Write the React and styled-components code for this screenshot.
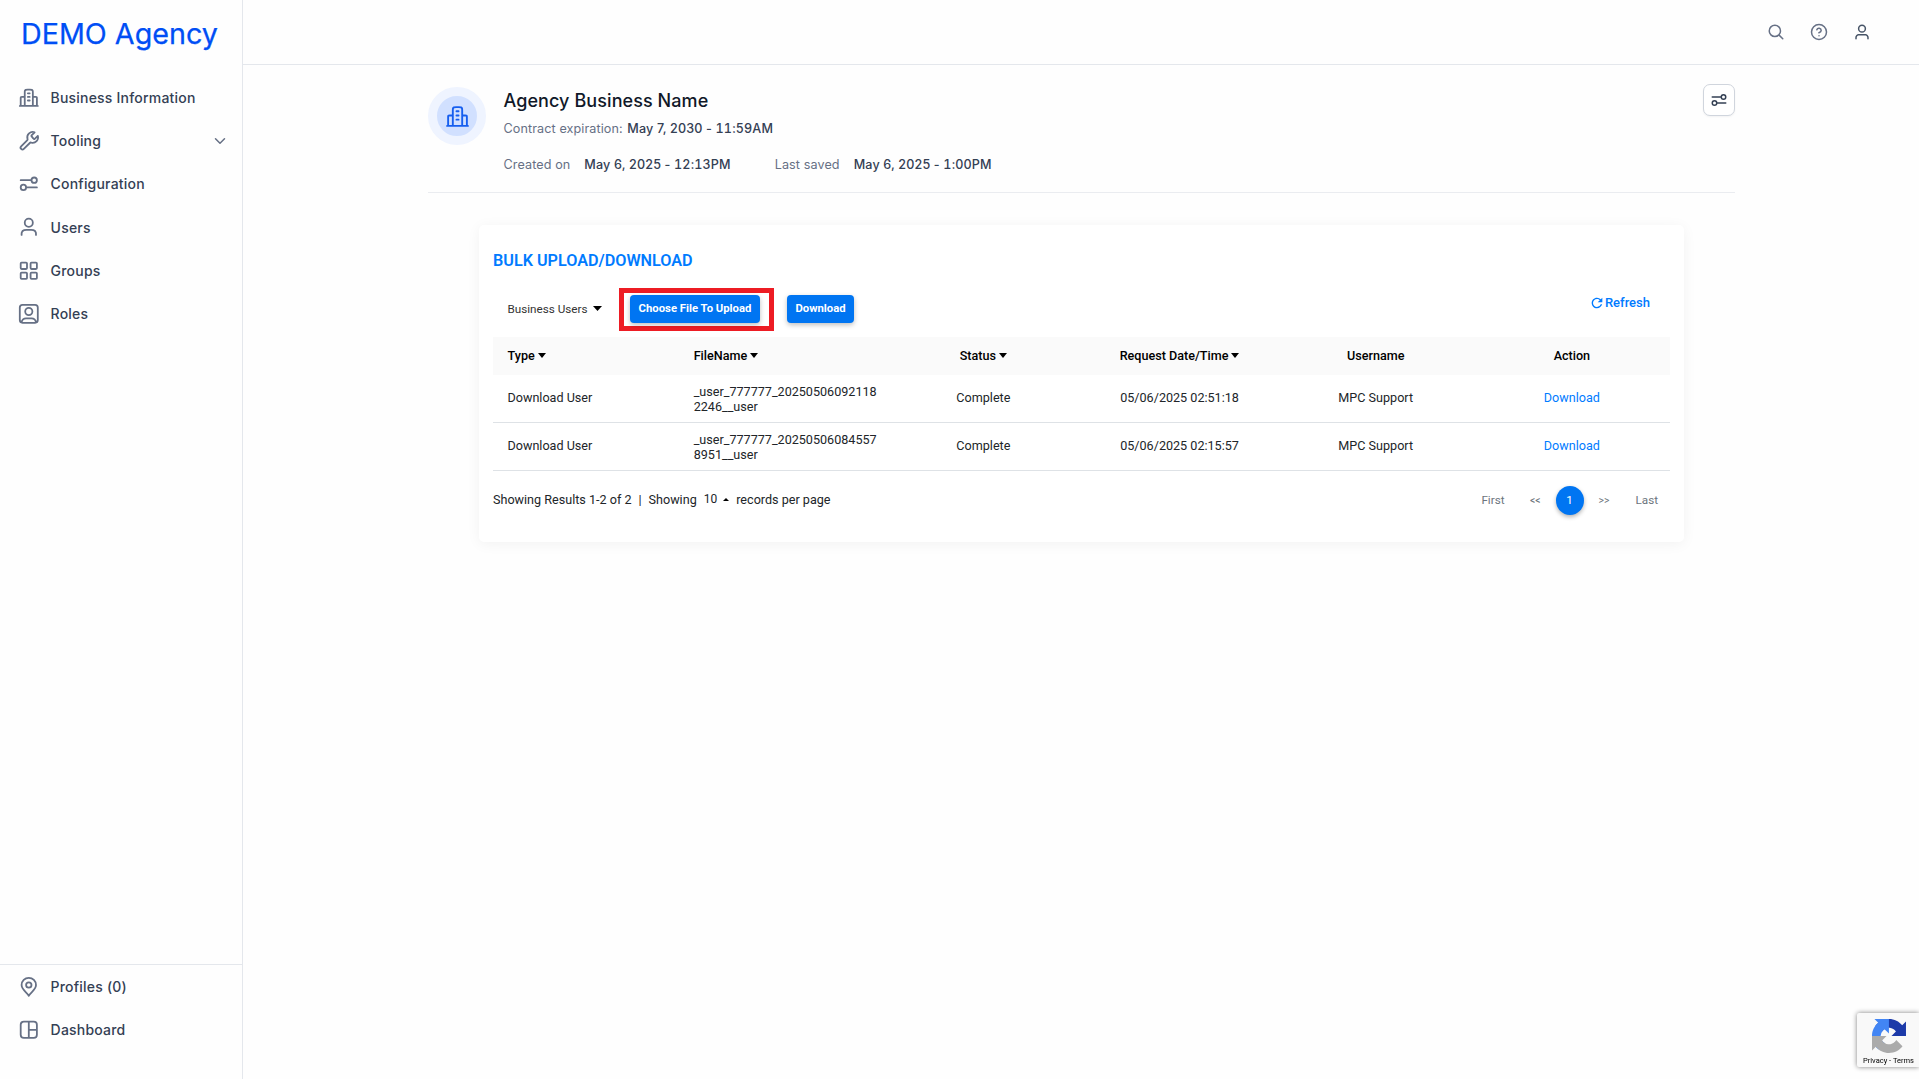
import React from "react";
import styled, { createGlobalStyle } from "styled-components";
import { MdRefresh } from "react-icons/md";

const GlobalStyle = createGlobalStyle`
  * {
    box-sizing: border-box;
  }
  body {
    margin: 0;
    background: #fefefe;
    font-family: "Inter", sans-serif;
    color: #344054;
    overflow: hidden;
  }
`;

const Page = styled.div`
  display: flex;
  height: 100vh;
  min-height: 1079px;
`;

const Sidebar = styled.aside`
  width: 243px;
  flex-shrink: 0;
  border-right: 1px solid #e4e7ec;
  display: flex;
  flex-direction: column;
  justify-content: space-between;
`;

const Logo = styled.div`
  padding: 16px 0 0 21px;
  height: 76px;
  font-size: 28.7px;
  line-height: 36px;
  color: #004ef5;
  -webkit-text-stroke: 0.25px #004ef5;
  white-space: nowrap;
`;

const Nav = styled.nav`
  display: flex;
  flex-direction: column;
`;

const NavItem = styled.a`
  display: flex;
  align-items: center;
  height: 43.2px;
  padding: 0 13px 0 18px;
  font-size: 14px;
  font-weight: 500;
  letter-spacing: 0.2px;
  color: #344054;
  span {
    flex: 1;
    margin-left: 11px;
  }
`;

const BottomNav = styled(Nav)`
  border-top: 1px solid #e4e7ec;
  height: 115px;
  gap: 1px;
  ${NavItem} {
    height: 42.6px;
  }
`;

const Icon = styled.svg`
  width: ${(props) => props.$size || 21.6}px;
  height: ${(props) => props.$size || 21.6}px;
  flex-shrink: 0;
  fill: none;
  stroke: ${(props) => props.$color || "#667085"};
  stroke-width: ${(props) => props.$stroke || 2};
  stroke-linecap: round;
  stroke-linejoin: round;
`;

const Main = styled.main`
  flex: 1;
  display: flex;
  flex-direction: column;
`;

const TopBar = styled.header`
  height: 65px;
  border-bottom: 1px solid #e4e7ec;
  display: flex;
  justify-content: flex-end;
  align-items: center;
  gap: 25px;
  padding-right: 48px;
`;

const Content = styled.section`
  width: 1307px;
  margin-left: 185px;
`;

const Profile = styled.div`
  display: flex;
  height: 128px;
  padding-top: 19px;
  border-bottom: 1px solid #eaecf0;
`;

const Avatar = styled.div`
  width: 58px;
  height: 58px;
  margin-top: 3px;
  border-radius: 50%;
  border: 9px solid #eff4ff;
  background: #d1e0ff;
  display: flex;
  align-items: center;
  justify-content: center;
`;

const Details = styled.div`
  flex: 1;
  margin-left: 17.5px;
  h1 {
    margin: 3px 0 0;
    font-size: 18px;
    line-height: 27px;
    font-weight: 500;
    letter-spacing: 0.08px;
    color: #101828;
  }
`;

const Meta = styled.div`
  display: flex;
  font-size: 12.6px;
  line-height: 18px;
  margin-top: ${(props) => props.$top}px;
  label {
    color: #667085;
    letter-spacing: 0.1px;
    margin-right: ${(props) => props.$gap}px;
  }
  span {
    font-weight: 500;
    letter-spacing: 0.15px;
    margin-right: 44px;
  }
  time {
    font-variant-numeric: tabular-nums;
  }
`;

const SettingsButton = styled.button`
  width: 32px;
  height: 32px;
  padding: 0;
  display: flex;
  align-items: center;
  justify-content: center;
  background: white;
  border: 1px solid #d0d5dd;
  border-radius: 7px;
  box-shadow: 0 1px 2px rgba(16, 24, 40, 0.05);
`;

const Card = styled.div`
  width: 1205px;
  height: 317px;
  margin: 32px auto 0;
  padding: 26px 14px 0;
  background: white;
  border-radius: 5px;
  box-shadow: 0 2px 14px rgba(0, 0, 0, 0.05);
  font-family: "Roboto", sans-serif;
  color: #212529;
  h2 {
    margin: 0;
    font-size: 16.2px;
    line-height: 20px;
    font-weight: 600;
    color: #007bff;
  }
`;

const Toolbar = styled.div`
  display: flex;
  align-items: center;
  height: 43px;
  margin: 17px 0 6px;
  padding: 0 20px 0 14.5px;
`;

const UserSelect = styled.div`
  display: flex;
  align-items: center;
  width: 111.5px;
  margin-bottom: 2px;
  font-size: 11.7px;
  color: #333;
  white-space: nowrap;
  svg {
    margin-left: 5px;
  }
`;

const BlueButton = styled.button`
  width: ${(props) => props.$width}px;
  height: 28px;
  margin-bottom: 1px;
  padding: 0 0 1px;
  border: none;
  border-radius: 4px;
  background: #0075f2;
  color: white;
  font-family: "Roboto", sans-serif;
  font-size: 11.3px;
  font-weight: 700;
  white-space: nowrap;
  box-shadow: 0 2px 5px rgba(0, 0, 0, 0.25);
`;

const Highlight = styled.div`
  display: flex;
  align-items: flex-start;
  width: 155px;
  height: 43px;
  padding: 2px 6px 0;
  border: 5px solid #ed1c24;
  margin-right: 13px;
`;

const Refresh = styled.a`
  display: flex;
  align-items: center;
  margin: 0 0 14px auto;
  font-size: 13px;
  font-weight: 500;
  color: #007bff;
`;

const Table = styled.table`
  width: 100%;
  table-layout: fixed;
  border-collapse: separate;
  border-spacing: 0;
  font-size: 12.6px;
  line-height: 15px;
  th {
    height: 38px;
    padding: 0 0 1px;
    background: #fafafa;
    color: black;
    font-weight: 500;
  }
  th svg {
    margin: 0 0 2px 3px;
  }
  td {
    height: 48px;
    padding: 0 0 3px;
    text-align: center;
    border-bottom: 1px solid #dee2e6;
  }
  th:first-child,
  td:first-child {
    padding-left: 14.5px;
    text-align: left;
  }
  th:nth-child(2),
  td:nth-child(2) {
    padding-left: 4.5px;
    padding-right: 8px;
    text-align: left;
    word-break: break-all;
  }
  td:nth-child(2) {
    padding-top: 1px;
    padding-bottom: 0;
  }
  td a {
    color: #007bff;
  }
`;

const Footer = styled.div`
  display: flex;
  justify-content: space-between;
  align-items: center;
  height: 59px;
  padding-right: 12px;
  font-size: 12.6px;
`;

const Summary = styled.div`
  display: flex;
  align-items: center;
  padding-bottom: 3px;
  b {
    font-weight: 400;
    font-size: 12px;
    margin: 0 6px 0 7px;
  }
  i {
    font-style: normal;
    margin: 0 7px;
  }
  svg {
    margin-right: 7px;
  }
`;

const Pager = styled.div`
  display: flex;
  align-items: center;
  font-size: 11.7px;
  color: #6c757d;
`;

const PageLink = styled.span`
  padding-bottom: 2px;
`;

const Arrows = styled(PageLink)`
  font-size: 10.4px;
  padding-bottom: 1px;
  margin: ${(props) => (props.$next ? "0 26px 0 15px" : "0 15px 0 25.5px")};
`;

const CurrentPage = styled.div`
  width: 28px;
  height: 29px;
  border-radius: 50%;
  background: #0075f2;
  color: white;
  text-align: center;
  line-height: 28px;
  box-shadow: 0 2px 4px rgba(0, 0, 0, 0.3);
`;

const Captcha = styled.div`
  position: fixed;
  right: 0;
  bottom: 12px;
  width: 62px;
  height: 54px;
  padding: 6px 0 0 1px;
  background: #f9f9f9;
  border-radius: 2px 0 0 2px;
  box-shadow: 0 0 5px gray;
  display: flex;
  flex-direction: column;
  align-items: center;
  font-family: "Roboto", sans-serif;
  font-size: 7.5px;
  line-height: 15px;
  color: black;
  svg {
    width: 34px;
    height: 34px;
    flex-shrink: 0;
  }
`;

const paths = {
  building:
    "M7.5 11H4.6c-.56 0-.84 0-1.054.109a1 1 0 0 0-.437.437C3 11.76 3 12.04 3 12.6V21m13.5-10h2.9c.56 0 .84 0 1.054.109a1 1 0 0 1 .437.437C21 11.76 21 12.04 21 12.6V21m-4.5 0V6.2c0-1.12 0-1.68-.218-2.108a2 2 0 0 0-.874-.874C14.98 3 14.42 3 13.3 3h-2.6c-1.12 0-1.68 0-2.108.218a2 2 0 0 0-.874.874C7.5 4.52 7.5 5.08 7.5 6.2V21M22 21H2m9-14h2m-2 4h2m-2 4h2",
  tool: "M15.631 7.631c-.396-.396-.594-.594-.668-.822a1 1 0 0 1 0-.618c.074-.228.272-.426.668-.822l2.836-2.836a6 6 0 0 0-7.939 7.15c.128.476.192.713.18.864a1 1 0 0 1-.12.384c-.072.132-.204.265-.468.529L3.5 18.08a2.121 2.121 0 0 0 3 3l6.62-6.62c.264-.264.397-.396.53-.468a1 1 0 0 1 .383-.12c.15-.012.388.052.863.18a6 6 0 0 0 7.151-7.52l-2.836 2.836c-.396.396-.594.594-.822.668a1 1 0 0 1-.618 0c-.229-.074-.427-.272-.823-.668z",
  sliders:
    "M3 8h12m0 0a3 3 0 1 0 6 0 3 3 0 0 0-6 0zm-6 8h12M9 16a3 3 0 1 1-6 0 3 3 0 0 1 6 0z",
  user: "M20 21c0-1.396 0-2.093-.172-2.661a4 4 0 0 0-2.667-2.667c-.568-.172-1.265-.172-2.661-.172h-5c-1.396 0-2.093 0-2.661.172a4 4 0 0 0-2.667 2.667C4 18.907 4 19.604 4 21M16.5 7.5a4.5 4.5 0 1 1-9 0 4.5 4.5 0 0 1 9 0z",
  grid: "M4 3h5q1 0 1 1v5q0 1-1 1H4q-1 0-1-1V4q0-1 1-1zM15 3h5q1 0 1 1v5q0 1-1 1h-5q-1 0-1-1V4q0-1 1-1zM15 14h5q1 0 1 1v5q0 1-1 1h-5q-1 0-1-1v-5q0-1 1-1zM4 14h5q1 0 1 1v5q0 1-1 1H4q-1 0-1-1v-5q0-1 1-1z",
  userSquare:
    "M5 2h14a3 3 0 0 1 3 3v14a3 3 0 0 1-3 3H5a3 3 0 0 1-3-3V5a3 3 0 0 1 3-3zM4 21.5c.5-3.2 2.5-4.5 5-4.5h6c2.5 0 4.5 1.3 5 4.5M16 9.5a4 4 0 1 1-8 0 4 4 0 0 1 8 0z",
  pin: "M12 13a3 3 0 1 0 0-6 3 3 0 0 0 0 6zM12 22c2-4 8-6.582 8-12a8 8 0 1 0-16 0c0 5.418 6 8 8 12z",
  layout:
    "M6.5 3h11A3.5 3.5 0 0 1 21 6.5v11a3.5 3.5 0 0 1-3.5 3.5h-11A3.5 3.5 0 0 1 3 17.5v-11A3.5 3.5 0 0 1 6.5 3zM12 3v18M12 12h9",
  chevron: "M6 9l6 6 6-6",
  search: "M21 21l-5.2-5.2M18 10.5a7.5 7.5 0 1 1-15 0 7.5 7.5 0 0 1 15 0z",
  help: "M9.09 9a3 3 0 0 1 5.83 1c0 2-3 3-3 3m.08 4h.01M22 12a10 10 0 1 1-20 0 10 10 0 0 1 20 0z",
};

const LineIcon = ({ name, size, color, stroke }) => (
  <Icon viewBox="0 0 24 24" $size={size} $color={color} $stroke={stroke}>
    <path d={paths[name]} />
  </Icon>
);

const Caret = ({ width = 8, height = 5, up }) => (
  <svg width={width} height={height} viewBox="0 0 8 4" preserveAspectRatio="none">
    <path d={up ? "M0 4L4 0L8 4z" : "M0 0H8L4 4z"} fill="black" />
  </svg>
);

const navItems = [
  { icon: "building", text: "Business Information" },
  { icon: "tool", text: "Tooling", open: true },
  { icon: "sliders", text: "Configuration" },
  { icon: "user", text: "Users" },
  { icon: "grid", text: "Groups" },
  { icon: "userSquare", text: "Roles" },
];

const bottomItems = [
  { icon: "pin", text: "Profiles (0)" },
  { icon: "layout", text: "Dashboard" },
];

const columns = [
  { title: "Type", sort: true },
  { title: "FileName", sort: true },
  { title: "Status", sort: true },
  { title: "Request Date/Time", sort: true },
  { title: "Username" },
  { title: "Action" },
];

const rows = [
  { file: "_user_777777_202505060921182246__user", date: "05/06/2025 02:51:18" },
  { file: "_user_777777_202505060845578951__user", date: "05/06/2025 02:15:57" },
];

const renderItem = (item) => (
  <NavItem key={item.text}>
    <LineIcon name={item.icon} />
    <span>{item.text}</span>
    {item.open ? <LineIcon name="chevron" size={18} /> : null}
  </NavItem>
);

export default function App() {
  return (
    <Page>
      <GlobalStyle />
      <Sidebar>
        <div>
          <Logo>DEMO Agency</Logo>
          <Nav>{navItems.map(renderItem)}</Nav>
        </div>
        <BottomNav>{bottomItems.map(renderItem)}</BottomNav>
      </Sidebar>

      <Main>
        <TopBar>
          <LineIcon name="search" size={18} />
          <LineIcon name="help" size={18} />
          <LineIcon name="user" size={18} color="#475467" />
        </TopBar>

        <Content>
          <Profile>
            <Avatar>
              <LineIcon name="building" size={25} color="#155eef" stroke={1.8} />
            </Avatar>
            <Details>
              <h1>Agency Business Name</h1>
              <Meta $top={6} $gap={4.5}>
                <label>Contract expiration:</label>
                <span>
                  May 7, 2030 - <time>11:59AM</time>
                </span>
              </Meta>
              <Meta $top={18} $gap={14}>
                <label>Created on</label>
                <span>
                  May 6, 2025 - <time>12:13PM</time>
                </span>
                <label>Last saved</label>
                <span>
                  May 6, 2025 - <time>1:00PM</time>
                </span>
              </Meta>
            </Details>
            <SettingsButton>
              <LineIcon name="sliders" size={18} color="#344054" />
            </SettingsButton>
          </Profile>

          <Card>
            <h2>BULK UPLOAD/DOWNLOAD</h2>
            <Toolbar>
              <UserSelect>
                Business Users
                <Caret width={9} height={5} />
              </UserSelect>
              <Highlight>
                <BlueButton $width={130}>Choose File To Upload</BlueButton>
              </Highlight>
              <BlueButton $width={67}>Download</BlueButton>
              <Refresh>
                <MdRefresh size={16} />
                Refresh
              </Refresh>
            </Toolbar>
            <Table>
              <thead>
                <tr>
                  {columns.map((column) => (
                    <th key={column.title}>
                      {column.title}
                      {column.sort ? <Caret /> : null}
                    </th>
                  ))}
                </tr>
              </thead>
              <tbody>
                {rows.map((row) => (
                  <tr key={row.file}>
                    <td>Download User</td>
                    <td>{row.file}</td>
                    <td>Complete</td>
                    <td>{row.date}</td>
                    <td>MPC Support</td>
                    <td>
                      <a>Download</a>
                    </td>
                  </tr>
                ))}
              </tbody>
            </Table>
            <Footer>
              <Summary>
                Showing Results 1-2 of 2<i>|</i>Showing<b>10</b>
                <Caret width={6} height={3} up />
                records per page
              </Summary>
              <Pager>
                <PageLink>First</PageLink>
                <Arrows>&lt;&lt;</Arrows>
                <CurrentPage>1</CurrentPage>
                <Arrows $next>&gt;&gt;</Arrows>
                <PageLink>Last</PageLink>
              </Pager>
            </Footer>
          </Card>
        </Content>
      </Main>

      <Captcha>
        <svg viewBox="0 0 64 64">
          <path
            fill="#1c3aa9"
            d="M64 31.955l-.033-1.37V4.687l-7.16 7.16C50.948 4.674 42.033.093 32.05.093c-10.4 0-19.622 4.96-25.458 12.64l11.736 11.86a15.55 15.55 0 0 1 4.754-5.334c2.05-1.6 4.952-2.906 8.968-2.906.485 0 .86.057 1.135.163 4.976.393 9.288 3.14 11.828 7.124l-8.307 8.307L64 31.953"
          />
          <path
            fill="#4285f4"
            d="M31.862.094l-1.37.033H4.594l7.16 7.16C4.58 13.147 0 22.06 0 32.046c0 10.4 4.96 19.622 12.64 25.458L24.5 45.768a15.55 15.55 0 0 1-5.334-4.754c-1.6-2.05-2.906-4.952-2.906-8.968 0-.485.057-.86.163-1.135.393-4.976 3.14-9.288 7.124-11.828l8.307 8.307L31.86.095"
          />
          <path
            fill="#ababab"
            d="M.001 32.045l.033 1.37v25.898l7.16-7.16c5.86 7.173 14.774 11.754 24.76 11.754 10.4 0 19.622-4.96 25.458-12.64l-11.736-11.86a15.55 15.55 0 0 1-4.754 5.334c-2.05 1.6-4.952 2.906-8.968 2.906-.485 0-.86-.057-1.135-.163-4.976-.393-9.288-3.14-11.828-7.124l8.307-8.307L0 32.05"
          />
        </svg>
        Privacy - Terms
      </Captcha>
    </Page>
  );
}
